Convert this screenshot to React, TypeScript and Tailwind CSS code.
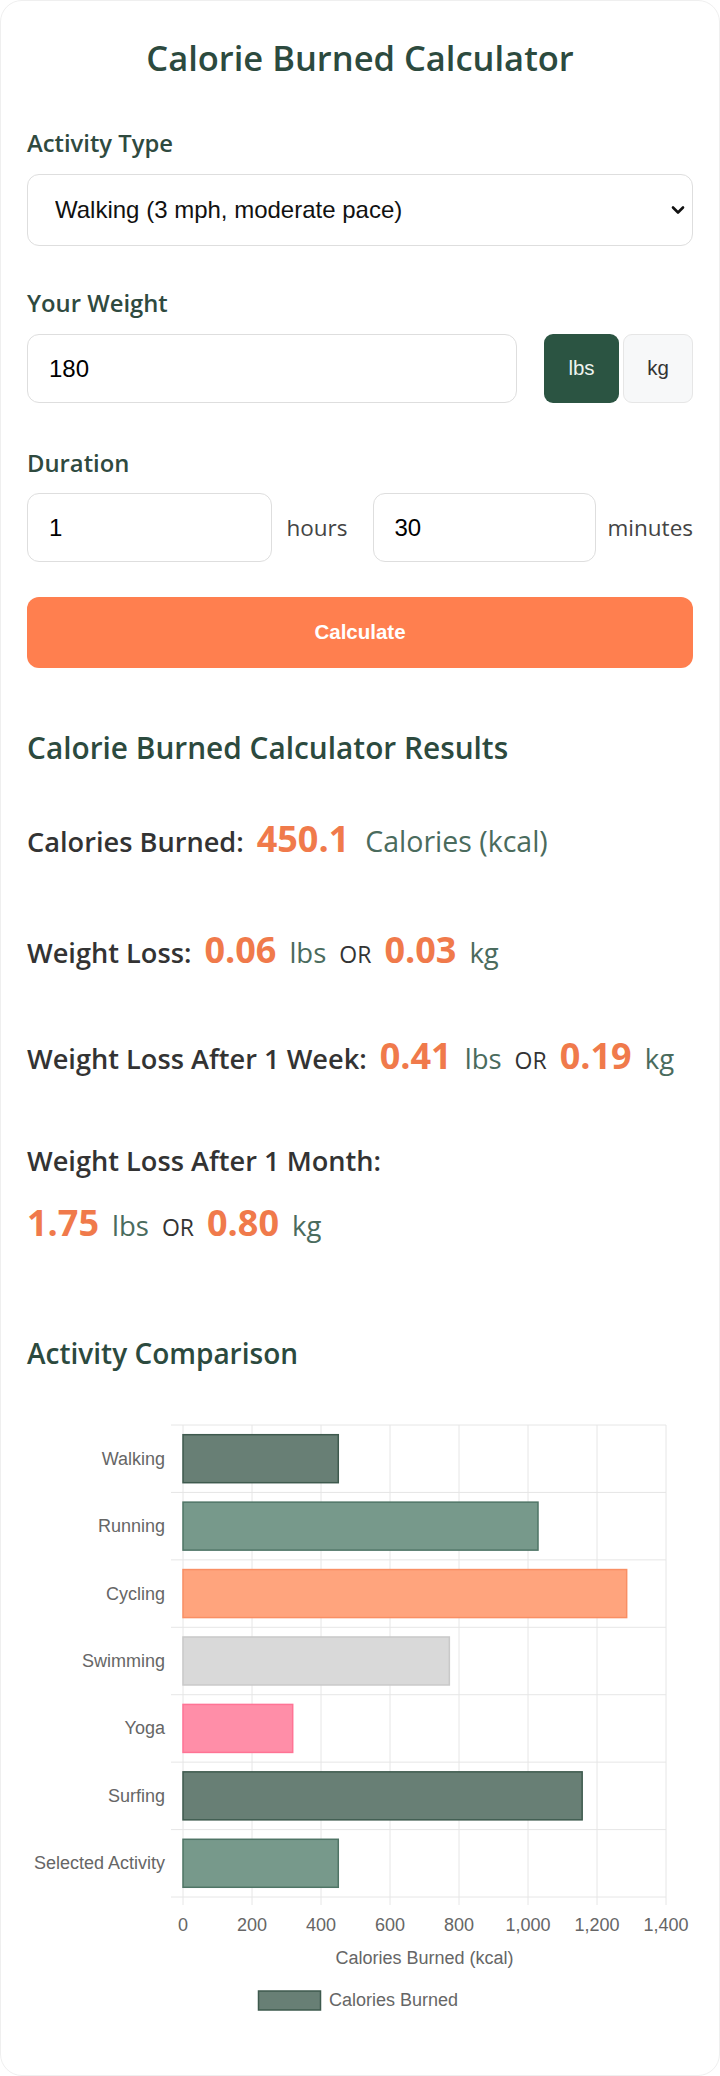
import React from "react";

const HEAD = { fontFamily: '"Open Sans", "Noto Sans", sans-serif' };
const ARIAL = { fontFamily: '"Liberation Sans", Arial, sans-serif' };

const bars = [
  { label: "Walking", value: 450.1, fill: "#687f75", stroke: "#3e5a4e" },
  { label: "Running", value: 1029, fill: "#77998b", stroke: "#4f7566" },
  { label: "Cycling", value: 1286, fill: "#ffa47d", stroke: "#f98f64" },
  { label: "Swimming", value: 772, fill: "#d9d9d9", stroke: "#c9c9c9" },
  { label: "Yoga", value: 318, fill: "#ff8ea8", stroke: "#ff7395" },
  { label: "Surfing", value: 1157, fill: "#687f75", stroke: "#3e5a4e" },
  { label: "Selected Activity", value: 450.1, fill: "#77998b", stroke: "#4f7566" },
];

function Chart() {
  const x0 = 156;
  const step = 69; // px per 200 kcal
  const top = 25;
  const rowH = 67.43;
  const bottom = top + rowH * bars.length;
  const ticks = [0, 200, 400, 600, 800, 1000, 1200, 1400];
  return (
    <svg width="666" height="640" viewBox="0 0 666 640" className="block" style={ARIAL}>
      {/* grid */}
      {ticks.map((t, i) => (
        <line key={t} x1={x0 + step * i} x2={x0 + step * i} y1={top} y2={bottom + 8} stroke="#e6e6e6" strokeWidth="1" />
      ))}
      {bars.map((b, i) => (
        <line key={b.label} x1={x0 - 12} x2={x0 + step * 7} y1={top + rowH * i} y2={top + rowH * i} stroke="#e6e6e6" strokeWidth="1" />
      ))}
      <line x1={x0 - 12} x2={x0 + step * 7} y1={bottom} y2={bottom} stroke="#e6e6e6" strokeWidth="1" />
      {/* bars */}
      {bars.map((b, i) => {
        const y = top + rowH * i + 9.7;
        const w = (b.value / 200) * step;
        return (
          <g key={b.label}>
            <rect x={x0} y={y} width={w} height={48} fill={b.fill} stroke={b.stroke} strokeWidth="1.5" />
            <text x={138} y={top + rowH * i + rowH / 2 + 6} textAnchor="end" fontSize="18" fill="#666">
              {b.label}
            </text>
          </g>
        );
      })}
      {/* x ticks */}
      {ticks.map((t, i) => (
        <text key={t} x={x0 + step * i} y={531} textAnchor="middle" fontSize="18" fill="#666">
          {t.toLocaleString("en-US")}
        </text>
      ))}
      <text x={397.5} y={564} textAnchor="middle" fontSize="18" fill="#666">
        Calories Burned (kcal)
      </text>
      {/* legend */}
      <rect x={231.5} y={591} width={62} height={19} fill="#687f75" stroke="#3e5a4e" strokeWidth="1.5" />
      <text x={302} y={606} fontSize="18" fill="#666">
        Calories Burned
      </text>
    </svg>
  );
}

function Value({ n, first }: { n: string; first?: boolean }) {
  return <span className={`${first ? "" : "ml-[13px]"} text-[36px] leading-none font-bold text-[#f07a4b]`}>{n}</span>;
}

function Unit({ u }: { u: string }) {
  return <span className="ml-[13px] text-[27.5px] leading-none font-normal text-[#4a6b5d]">{u}</span>;
}

function Or() {
  return <span className="ml-[13px] text-[23px] leading-none font-normal text-[#333]">OR</span>;
}

export default function App() {
  return (
    <div className="min-h-[2076px] bg-white">
      <div className="rounded-[22px] border border-[#efefef] bg-white px-[26px] pt-[36px] pb-[35px]" style={HEAD}>
        <h1 className="text-center text-[34.5px] font-semibold leading-[42px] text-[#2c4a3e]">Calorie Burned Calculator</h1>

        {/* Activity */}
        <label className="mt-[48px] block text-[23.8px] font-semibold leading-[32px] text-[#2f4a3f]">Activity Type</label>
        <div className="relative mt-[15px]">
          <select
            className="h-[72px] w-full appearance-none rounded-[12px] border border-[#dedede] bg-white pl-[27px] pr-[40px] text-[24px] text-[#111] outline-none"
            style={ARIAL}
            defaultValue="walking"
          >
            <option value="walking">Walking (3 mph, moderate pace)</option>
            <option value="running">Running (6 mph)</option>
            <option value="cycling">Cycling (moderate)</option>
          </select>
          <svg className="pointer-events-none absolute right-[8px] top-[31px] h-[10px] w-[14px]" viewBox="0 0 14 10">
            <path d="M2 2.5 L7 7.5 L12 2.5" fill="none" stroke="#111" strokeWidth="2.6" strokeLinecap="round" strokeLinejoin="round" />
          </svg>
        </div>

        {/* Weight */}
        <label className="mt-[41px] block text-[23.8px] font-semibold leading-[32px] text-[#2f4a3f]">Your Weight</label>
        <div className="mt-[15px] flex items-stretch">
          <input
            defaultValue="180"
            className="h-[69px] w-[490px] rounded-[12px] border border-[#dedede] bg-white px-[21px] text-[24px] text-black outline-none"
            style={ARIAL}
          />
          <button
            className="ml-[27px] h-[69px] w-[75px] rounded-[9px] bg-[#2b5442] text-[20.5px] text-[#eef3ef]"
            style={ARIAL}
          >
            lbs
          </button>
          <button
            className="ml-[4px] h-[69px] w-[70px] rounded-[9px] border border-[#e6e6e6] bg-[#f7f8f9] text-[20.5px] text-[#333]"
            style={ARIAL}
          >
            kg
          </button>
        </div>

        {/* Duration */}
        <label className="mt-[44px] block text-[23.8px] font-semibold leading-[32px] text-[#2f4a3f]">Duration</label>
        <div className="mt-[14px] flex items-center gap-[25px]">
          <div className="flex min-w-0 flex-1 items-center gap-[14px]">
            <input
              defaultValue="1"
              className="h-[69px] w-0 min-w-0 flex-1 rounded-[12px] border border-[#dedede] bg-white px-[21px] text-[24px] text-black outline-none"
              style={ARIAL}
            />
            <span className="text-[22.5px] text-[#444]">hours</span>
          </div>
          <div className="flex min-w-0 flex-1 items-center gap-[12px]">
            <input
              defaultValue="30"
              className="h-[69px] w-0 min-w-0 flex-1 rounded-[12px] border border-[#dedede] bg-white px-[21px] text-[24px] text-black outline-none"
              style={ARIAL}
            />
            <span className="text-[22.5px] text-[#444]">minutes</span>
          </div>
        </div>

        <button
          className="mt-[35px] h-[71px] w-full rounded-[12px] bg-[#ff7f4f] text-[20.5px] font-bold text-white"
          style={ARIAL}
        >
          Calculate
        </button>

        {/* Results */}
        <h2 className="mt-[60px] text-[29.8px] font-semibold leading-[40px] text-[#2c4a3e]">Calorie Burned Calculator Results</h2>

        <p className="mt-[40.5px] whitespace-nowrap text-[27.2px] font-semibold leading-[65px] text-[#333]">
          <span className="leading-none">Calories Burned:</span>
          <Value n="450.1" />
          <span className="ml-[16px] text-[28.5px] leading-none font-normal text-[#4a6b5d]">Calories (kcal)</span>
        </p>

        <p className="mt-[46px] whitespace-nowrap text-[27.2px] font-semibold leading-[65px] text-[#333]">
          <span className="leading-none">Weight Loss:</span>
          <Value n="0.06" />
          <Unit u="lbs" />
          <Or />
          <Value n="0.03" />
          <Unit u="kg" />
        </p>

        <p className="mt-[41px] whitespace-nowrap text-[27.2px] font-semibold leading-[65px] text-[#333]">
          <span className="leading-none">Weight Loss After 1 Week:</span>
          <Value n="0.41" />
          <Unit u="lbs" />
          <Or />
          <Value n="0.19" />
          <Unit u="kg" />
        </p>

        <p className="mt-[37px] text-[27.2px] font-semibold leading-[65px] text-[#333]">
          <span className="leading-none">Weight Loss After 1 Month:</span>
          <br />
          <Value n="1.75" first />
          <Unit u="lbs" />
          <Or />
          <Value n="0.80" />
          <Unit u="kg" />
        </p>

        <h2 className="mt-[76.5px] text-[28px] font-semibold leading-[38px] text-[#2c4a3e]">Activity Comparison</h2>

        <div className="mt-[28px]">
          <Chart />
        </div>
      </div>
    </div>
  );
}
